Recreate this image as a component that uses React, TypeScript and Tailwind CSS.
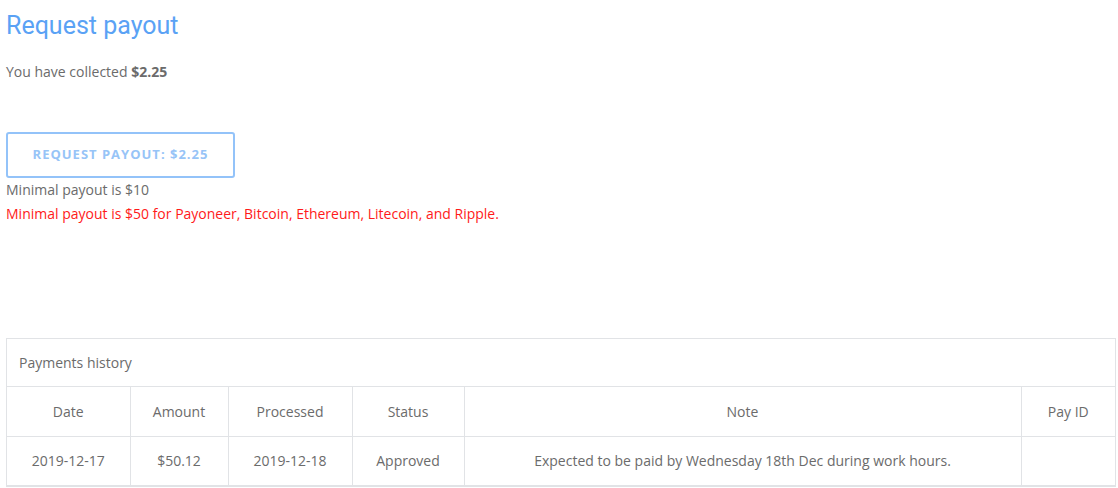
import React from 'react';

interface Payment {
  date: string;
  amount: string;
  processed: string;
  status: string;
  note: string;
  payId: string;
}

const payments: Payment[] = [
  {
    date: '2019-12-17',
    amount: '$50.12',
    processed: '2019-12-18',
    status: 'Approved',
    note: 'Expected to be paid by Wednesday 18th Dec during work hours.',
    payId: '',
  },
];

function App() {
  const collected = '$2.25';

  return (
    <div className="min-h-screen bg-white pl-[6px] pr-[2px] font-['Open_Sans',sans-serif] text-[14px] text-[#6b6b6b]">
      <h1 className="pt-[10px] font-['Roboto',sans-serif] text-[25px] leading-[32px] text-[#5aa2f5]">
        Request payout
      </h1>

      <p className="mt-[20px] leading-[20px]">
        You have collected <b className="font-bold">{collected}</b>
      </p>

      <button className="mt-[50px] h-[46px] w-[229px] rounded-[3px] border-2 border-[#93c3f9] bg-white text-[13px] font-bold uppercase tracking-[1px] text-[#97c4f7]">
        Request payout: {collected}
      </button>

      <p className="mt-[2px] leading-[20px]">Minimal payout is $10</p>
      <p className="mt-[4px] leading-[20px] text-[#ff1a1a]">
        Minimal payout is $50 for Payoneer, Bitcoin, Ethereum, Litecoin, and Ripple.
      </p>

      <div className="mt-[114px] border border-[#e1e3e6]">
        <div className="h-[48px] border-b border-[#e1e3e6] px-[12px] leading-[48px]">Payments history</div>
        <table className="w-full table-fixed border-collapse">
          <colgroup>
            <col className="w-[123px]" />
            <col className="w-[98px]" />
            <col className="w-[124px]" />
            <col className="w-[112px]" />
            <col />
            <col className="w-[94px]" />
          </colgroup>
          <thead>
            <tr className="h-[49px]">
              {['Date', 'Amount', 'Processed', 'Status', 'Note', 'Pay ID'].map((h, i) => (
                <th
                  key={h}
                  className={`border-b border-[#e1e3e6] text-center font-normal ${i < 5 ? 'border-r' : ''}`}
                >
                  {h}
                </th>
              ))}
            </tr>
          </thead>
          <tbody>
            {payments.map((p) => (
              <tr key={p.date} className="h-[49px]">
                <td className="border-b border-r border-[#e1e3e6] text-center">{p.date}</td>
                <td className="border-b border-r border-[#e1e3e6] text-center">{p.amount}</td>
                <td className="border-b border-r border-[#e1e3e6] text-center">{p.processed}</td>
                <td className="border-b border-r border-[#e1e3e6] text-center">{p.status}</td>
                <td className="border-b border-r border-[#e1e3e6] text-center">{p.note}</td>
                <td className="border-b border-[#e1e3e6] text-center">{p.payId}</td>
              </tr>
            ))}
          </tbody>
        </table>
      </div>
    </div>
  );
}

export default App;
